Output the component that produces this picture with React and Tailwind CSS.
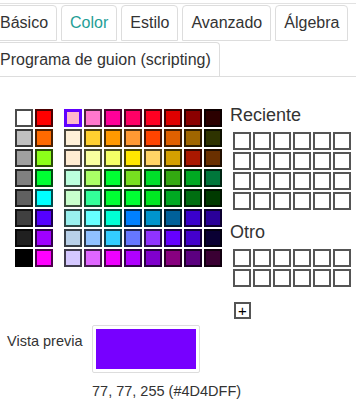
import React from 'react';

const grays = ['#ffffff', '#c0c0c0', '#a0a0a0', '#808080', '#606060', '#404040', '#202020', '#000000'];
const primaries = ['#ff0000', '#ff6a00', '#8cff1a', '#00ff33', '#00ffff', '#5500ff', '#a000ff', '#ff00ff'];

const palette = [
    ['#ffb8cc', '#ff77cc', '#ff0099', '#ff0066', '#ff0022', '#e00000', '#8b0000', '#2b0000'],
    ['#fff0d8', '#ffd030', '#ff9900', '#ff9933', '#ff4400', '#e06000', '#a06600', '#2e3300'],
    ['#ffecd2', '#f9ff9f', '#f4ff66', '#ffe600', '#ffd466', '#d4a000', '#aa1800', '#6a3000'],
    ['#bbffdd', '#aaff66', '#00ff33', '#77e020', '#00e02a', '#33aa11', '#00aa22', '#00773b'],
    ['#c8ffcc', '#33ff99', '#00ff33', '#00ff33', '#00e822', '#00aa22', '#006e11', '#003a00'],
    ['#99f0ee', '#66ffff', '#00ffd5', '#0080ff', '#0094cc', '#00609a', '#3a00cc', '#2a0099'],
    ['#b8d0e8', '#90c0ff', '#33ccff', '#6677ff', '#9033ff', '#6600ff', '#4400cc', '#0a0033'],
    ['#d5c8ff', '#e066ff', '#ee00ff', '#b000ff', '#8000cc', '#880080', '#5c0080', '#3a0033'],
];

const tabs = ['Básico', 'Color', 'Estilo', 'Avanzado', 'Álgebra'];

function Tab({ label, active, last }) {
    return (
        <div
            className={`flex items-center px-2 border border-[#ddd] rounded-t-[4px] ${
                last ? 'h-[34px] border-b-0' : 'h-[36px]'
            } ${active ? 'text-[#1f9e96]' : 'text-[#333]'}`}
        >
            {label}
        </div>
    );
}

function Swatch({ color, selected }) {
    return (
        <div
            className={`w-[18px] h-[18px] ${selected ? 'border-[3px] border-[#6000ff]' : 'border-2 border-black/70'}`}
            style={{ backgroundColor: color }}
        />
    );
}

function EmptyGrid({ rows }) {
    return (
        <div className="ml-[3px] flex flex-col gap-[2px]">
            {Array.from({ length: rows }).map((_, r) => (
                <div key={r} className="flex gap-[2px]">
                    {Array.from({ length: 6 }).map((_, c) => (
                        <div key={c} className="w-[18px] h-[18px] border-2 border-[#555] bg-white" />
                    ))}
                </div>
            ))}
        </div>
    );
}

export default function App() {
    return (
        <div className="w-[356px] h-[406px] overflow-hidden bg-white text-[#333] font-['Liberation_Sans',Arial,sans-serif]">
            {/* tab bar */}
            <div className="pt-[3px]">
                <div className="border-t border-[#e2e2e2]" />
                <div className="mt-[1px] -ml-[9px] flex gap-1 text-[16px]">
                    {tabs.map((t) => (
                        <Tab key={t} label={t} active={t === 'Color'} />
                    ))}
                </div>
                <div className="mt-[1px] -ml-[9px] flex border-b border-[#ddd] text-[16px]">
                    <Tab label="Programa de guion (scripting)" last />
                </div>
            </div>

            {/* palette + recent */}
            <div className="pt-[28px] flex items-start">
                <div className="mt-[4px] pl-[15px] flex gap-[11px]">
                    <div className="flex gap-[2px]">
                        {[grays, primaries].map((col, i) => (
                            <div key={i} className="flex flex-col gap-[2px]">
                                {col.map((c) => (
                                    <Swatch key={c} color={c} />
                                ))}
                            </div>
                        ))}
                    </div>
                    <div className="flex flex-col gap-[2px]">
                        {palette.map((row, r) => (
                            <div key={r} className="flex gap-[2px]">
                                {row.map((c, i) => (
                                    <Swatch key={i} color={c} selected={r === 0 && i === 0} />
                                ))}
                            </div>
                        ))}
                    </div>
                </div>

                <div className="ml-[8px] flex flex-col">
                    <div className="text-[18px] leading-[21px]">Reciente</div>
                    <div className="mt-[6px]">
                        <EmptyGrid rows={4} />
                    </div>
                    <div className="mt-[12px] text-[18px] leading-[21px]">Otro</div>
                    <div className="mt-[6px]">
                        <EmptyGrid rows={2} />
                    </div>
                    <div className="mt-[15px] ml-[4px] w-[17px] h-[17px] border-2 border-[#555] flex items-center justify-center text-black text-[15px] leading-none">
                        +
                    </div>
                </div>
            </div>

            {/* preview */}
            <div className="mt-[6px] flex items-start">
                <div className="w-[92px] pl-[7px] mt-[8px] text-[14.5px] leading-[17px]">Vista previa</div>
                <div className="border border-[#ddd] rounded-[2px] p-[3px]">
                    <div className="w-[100px] h-[40px] bg-[#7700ff]" />
                </div>
            </div>
            <div className="ml-[92px] mt-[10px] text-[14.5px] leading-[17px]">77, 77, 255 (#4D4DFF)</div>
        </div>
    );
}
